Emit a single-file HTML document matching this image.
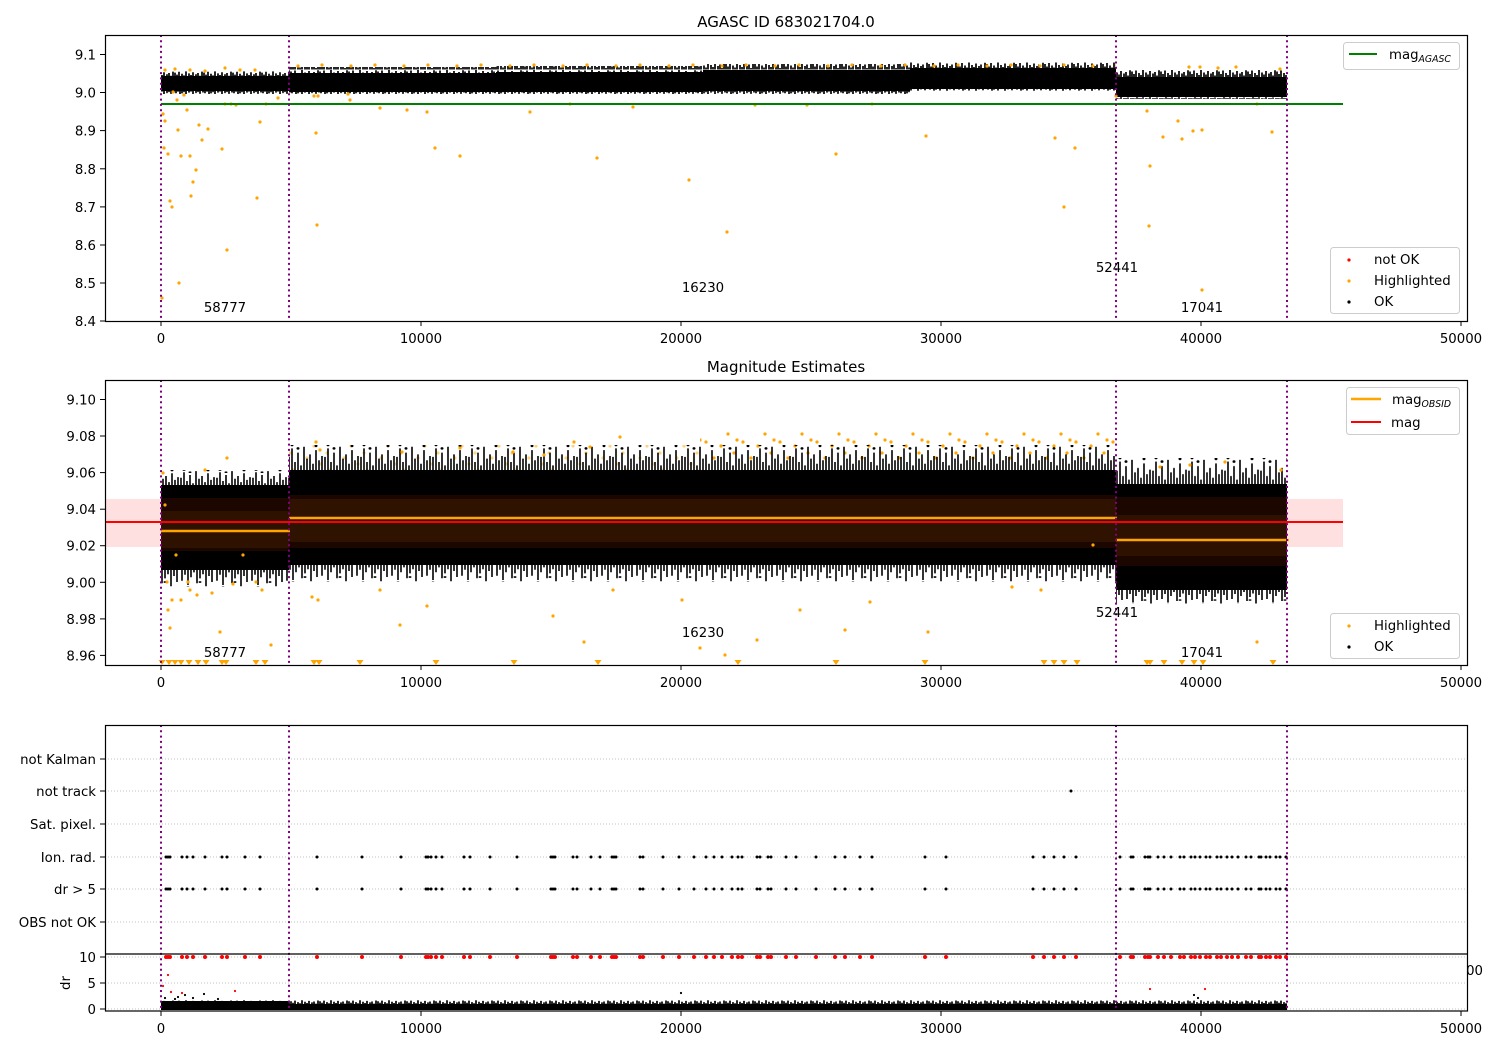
<!DOCTYPE html>
<html><head><meta charset="utf-8">
<style>
html,body{margin:0;padding:0;background:#fff;}
svg{display:block;font-family:"DejaVu Sans","Liberation Sans",sans-serif;}
</style></head>
<body>
<svg width="1500" height="1050" viewBox="0 0 1500 1050" xmlns="http://www.w3.org/2000/svg">
<defs>
<g id="upg" stroke="#000" stroke-width="1.7">
<path d="M1 30V8M3 30V18M5 30V4M8 30V14M10 30V22M12 30V2M15 30V12M17 30V20M19 30V6M22 30V16M24 30V10M26 30V24M28 30V3"/>
</g>
<g id="upg2" stroke="#000" stroke-width="1.6">
<path d="M1 30V14M4 30V4M7 30V20M10 30V9M13 30V24M16 30V2M19 30V16M22 30V11M25 30V22M28 30V6M31 30V18M34 30V13"/>
<path d="M4 0h0M16 -3h0M28 1h0M10 4h0" stroke-width="3" stroke-linecap="round"/>
</g>
<g id="dng" stroke="#000" stroke-width="1.7">
<path d="M1 0V20M3 0V9M5 0V26M8 0V13M10 0V5M12 0V28M15 0V17M17 0V8M19 0V24M22 0V12M24 0V19M26 0V6M28 0V27"/>
</g>
<g id="dng2" stroke="#000" stroke-width="1.6">
<path d="M2 0V18M5 0V8M8 0V25M11 0V12M14 0V4M17 0V22M20 0V14M23 0V7M26 0V27M29 0V10M32 0V20"/>
<path d="M8 29h0M26 30h0M20 20h0" stroke-width="3" stroke-linecap="round"/>
</g>
<pattern id="up1" patternUnits="userSpaceOnUse" width="29" height="30" patternTransform="translate(0,71) scale(1,0.2)"><use href="#upg"/></pattern>
<pattern id="up1b" patternUnits="userSpaceOnUse" width="29" height="30" patternTransform="translate(0,62) scale(1,0.25)"><use href="#upg"/></pattern>
<pattern id="dn1" patternUnits="userSpaceOnUse" width="29" height="30" patternTransform="translate(7,91) scale(1,0.12)"><use href="#dng"/></pattern>
<pattern id="up2" patternUnits="userSpaceOnUse" width="36" height="30" patternTransform="translate(0,445) scale(1,0.85)"><use href="#upg2"/></pattern>
<pattern id="up2a" patternUnits="userSpaceOnUse" width="36" height="30" patternTransform="translate(0,470) scale(1,0.55)"><use href="#upg2"/></pattern>
<pattern id="up2c" patternUnits="userSpaceOnUse" width="36" height="30" patternTransform="translate(0,458) scale(1,0.9)"><use href="#upg2"/></pattern>
<pattern id="dn2" patternUnits="userSpaceOnUse" width="35" height="30" patternTransform="translate(5,565) scale(1,0.6)"><use href="#dng2"/></pattern>
<pattern id="dn2a" patternUnits="userSpaceOnUse" width="35" height="30" patternTransform="translate(5,570) scale(1,0.6)"><use href="#dng2"/></pattern>
<pattern id="dn2c" patternUnits="userSpaceOnUse" width="35" height="30" patternTransform="translate(5,590) scale(1,0.5)"><use href="#dng2"/></pattern>
<pattern id="up3" patternUnits="userSpaceOnUse" width="29" height="30" patternTransform="translate(0,1000) scale(1,0.15)"><use href="#upg"/></pattern>
<pattern id="od" patternUnits="userSpaceOnUse" width="37" height="30">
<path d="M3 22h0M11 8h0M18 26h0M25 14h0M31 3h0M34 20h0" stroke="#ffa500" stroke-width="3.2" stroke-linecap="round"/></pattern>
<pattern id="od1" patternUnits="userSpaceOnUse" width="53" height="6" patternTransform="translate(0,62)">
<path d="M4 3h0M33 4h0" stroke="#ffa500" stroke-width="3.2" stroke-linecap="round"/></pattern>
<path id="ev" d="M166 0h0M168 0h0M170 0h0M182 0h0M187 0h0M193 0h0M205 0h0M222 0h0M227 0h0M245 0h0M260 0h0M317 0h0M362 0h0M401 0h0M426 0h0M428 0h0M431 0h0M436 0h0M442 0h0M464 0h0M470 0h0M490 0h0M517 0h0M551 0h0M553 0h0M555 0h0M573 0h0M577 0h0M591 0h0M600 0h0M612 0h0M614 0h0M616 0h0M640 0h0M643 0h0M663 0h0M679 0h0M694 0h0M706 0h0M714 0h0M722 0h0M732 0h0M738 0h0M742 0h0M757 0h0M760 0h0M768 0h0M771 0h0M786 0h0M796 0h0M816 0h0M835 0h0M845 0h0M860 0h0M872 0h0M925 0h0M946 0h0M1033 0h0M1044 0h0M1054 0h0M1064 0h0M1076 0h0M1120 0h0M1131 0h0M1133 0h0M1145 0h0M1148 0h0M1150 0h0M1158 0h0M1164 0h0M1171 0h0M1180 0h0M1184 0h0M1191 0h0M1195 0h0M1200 0h0M1206 0h0M1210 0h0M1217 0h0M1221 0h0M1227 0h0M1232 0h0M1238 0h0M1246 0h0M1251 0h0M1259 0h0M1261 0h0M1266 0h0M1270 0h0M1276 0h0M1280 0h0M1286 0h0"/>
</defs>
<rect width="1500" height="1050" fill="#fff"/>
<text x="1483" y="975" font-size="13.3" text-anchor="end" fill="#000">50000</text>

<text x="786" y="27" font-size="15" text-anchor="middle">AGASC ID 683021704.0</text>
<text x="786" y="372" font-size="15" text-anchor="middle">Magnitude Estimates</text>

<!-- PANEL 1 -->
<rect x="105" y="35" width="1362" height="286" fill="#fff"/>
<rect x="161" y="76" width="128" height="15" fill="#000"/>
<rect x="161" y="71" width="128" height="6" fill="url(#up1)"/>
<rect x="161" y="90" width="128" height="4" fill="url(#dn1)"/>
<!-- seg2 stepped -->
<rect x="289" y="73" width="207" height="19" fill="#000"/>
<rect x="496" y="72" width="207" height="20" fill="#000"/>
<rect x="703" y="70" width="207" height="21" fill="#000"/>
<rect x="910" y="68" width="206" height="21" fill="#000"/>
<rect x="289" y="67" width="207" height="7" fill="url(#up1b)"/>
<rect x="496" y="66" width="207" height="7" fill="url(#up1b)"/>
<rect x="703" y="64" width="207" height="7" fill="url(#up1b)"/>
<rect x="910" y="62" width="206" height="7" fill="url(#up1b)"/>
<rect x="289" y="91" width="621" height="3" fill="url(#dn1)"/>
<rect x="910" y="88" width="206" height="3" fill="url(#dn1)"/>
<rect x="1116" y="77" width="171" height="20" fill="#000"/>
<rect x="1116" y="70" width="171" height="8" fill="url(#up1b)"/>
<rect x="1116" y="96" width="171" height="3" fill="url(#dn1)"/>
<rect x="289" y="62" width="827" height="6" fill="url(#od1)"/>
<path d="M162 298h0M163 114h0M164 148h0M165 121h0M168 154h0M170 201h0M172 207h0M173 92h0M177 100h0M178 130h0M179 283h0M181 156h0M184 95h0M187 110h0M190 156h0M191 196h0M193 182h0M196 170h0M199 125h0M202 140h0M208 129h0M222 149h0M225 104h0M227 250h0M231 104h0M236 105h0M257 198h0M260 122h0M266 104h0M278 98h0M314 96h0M316 133h0M317 225h0M318 96h0M348 94h0M350 100h0M380 108h0M407 110h0M427 112h0M435 148h0M460 156h0M530 112h0M570 104h0M597 158h0M633 107h0M689 180h0M727 232h0M755 105h0M807 105h0M836 154h0M872 104h0M926 136h0M1055 138h0M1064 207h0M1075 148h0M1116 96h0M1147 111h0M1150 166h0M1149 226h0M1163 137h0M1182 139h0M1193 131h0M1202 290h0M1202 130h0M1257 104h0M1272 132h0M1178 121h0M165 70h0M175 69h0M190 70h0M205 71h0M225 68h0M240 70h0M255 70h0M1189 67h0M1200 67h0M1218 68h0M1236 67h0M1280 69h0" stroke="#ffa500" stroke-width="3.2" stroke-linecap="round"/>
<line x1="161" y1="104" x2="1343" y2="104" stroke="#008000" stroke-width="2"/>
<g stroke="#800080" stroke-width="2" stroke-dasharray="2,3.3">
<line x1="161" y1="35" x2="161" y2="321"/><line x1="289" y1="35" x2="289" y2="321"/>
<line x1="1116" y1="35" x2="1116" y2="321"/><line x1="1287" y1="35" x2="1287" y2="321"/>
</g>
<g font-size="13.3" text-anchor="middle">
<text x="225" y="312">58777</text><text x="703" y="292">16230</text>
<text x="1117" y="272">52441</text><text x="1202" y="312">17041</text>
</g>
<rect x="105.5" y="35.5" width="1362" height="286" fill="none" stroke="#000" stroke-width="1.2"/>
<g stroke="#000" stroke-width="1">
<line x1="161" y1="321" x2="161" y2="326"/><line x1="421" y1="321" x2="421" y2="326"/><line x1="681" y1="321" x2="681" y2="326"/><line x1="941" y1="321" x2="941" y2="326"/><line x1="1201" y1="321" x2="1201" y2="326"/><line x1="1461" y1="321" x2="1461" y2="326"/>
<line x1="100" y1="54.5" x2="105" y2="54.5"/><line x1="100" y1="92.5" x2="105" y2="92.5"/><line x1="100" y1="130.6" x2="105" y2="130.6"/><line x1="100" y1="168.8" x2="105" y2="168.8"/><line x1="100" y1="206.9" x2="105" y2="206.9"/><line x1="100" y1="245" x2="105" y2="245"/><line x1="100" y1="283" x2="105" y2="283"/><line x1="100" y1="321" x2="105" y2="321"/>
</g>
<g font-size="13.3" text-anchor="middle">
<text x="161" y="343">0</text><text x="421" y="343">10000</text><text x="681" y="343">20000</text><text x="941" y="343">30000</text><text x="1201" y="343">40000</text><text x="1461" y="343">50000</text>
</g>
<g font-size="13.3" text-anchor="end">
<text x="96" y="59.5">9.1</text><text x="96" y="97.5">9.0</text><text x="96" y="135.6">8.9</text><text x="96" y="173.8">8.8</text><text x="96" y="211.9">8.7</text><text x="96" y="250">8.6</text><text x="96" y="288">8.5</text><text x="96" y="326">8.4</text>
</g>
<rect x="1343.5" y="42.5" width="116" height="27" rx="3" fill="#fff" fill-opacity="0.8" stroke="#ccc"/>
<line x1="1349" y1="54" x2="1377" y2="54" stroke="#008000" stroke-width="2"/>
<text x="1389" y="59" font-size="13.3">mag<tspan font-size="9.3" font-style="italic" dy="3">AGASC</tspan></text>
<rect x="1330.5" y="247.5" width="129" height="66" rx="3" fill="#fff" fill-opacity="0.8" stroke="#ccc"/>
<circle cx="1349" cy="260" r="1.6" fill="#f00"/><circle cx="1349" cy="281" r="1.6" fill="#ffa500"/><circle cx="1349" cy="302" r="1.6" fill="#000"/>
<g font-size="13.3"><text x="1374" y="264">not OK</text><text x="1374" y="285">Highlighted</text><text x="1374" y="306">OK</text></g>

<!-- PANEL 2 -->
<rect x="105" y="380" width="1362" height="285" fill="#fff"/>
<rect x="105" y="499" width="1238" height="48" fill="#ff0000" fill-opacity="0.12"/>
<rect x="700" y="432" width="416" height="30" fill="url(#od)"/>
<rect x="289" y="445" width="411" height="25" fill="url(#od)" opacity="0.5"/>
<rect x="161" y="485" width="128" height="85" fill="#000"/>
<rect x="161" y="470" width="128" height="16" fill="url(#up2a)"/>
<rect x="161" y="569" width="128" height="18" fill="url(#dn2a)"/>
<rect x="289" y="470" width="827" height="95" fill="#000"/>
<rect x="289" y="445" width="827" height="26" fill="url(#up2)"/>
<rect x="289" y="564" width="827" height="18" fill="url(#dn2)"/>
<rect x="1116" y="484" width="171" height="106" fill="#000"/>
<rect x="1116" y="458" width="171" height="27" fill="url(#up2c)"/>
<rect x="1116" y="589" width="171" height="15" fill="url(#dn2c)"/>
<rect x="161" y="498" width="128" height="53" fill="#1c0600"/>
<rect x="161" y="511" width="128" height="37" fill="#2f1100"/>
<rect x="289" y="495" width="827" height="53" fill="#1c0600"/>
<rect x="289" y="499" width="827" height="43" fill="#301200"/>
<rect x="1116" y="497" width="171" height="69" fill="#1c0600"/>
<rect x="1116" y="515" width="171" height="41" fill="#2f1100"/>
<line x1="105" y1="522" x2="1343" y2="522" stroke="#f00" stroke-width="2"/>
<g stroke="#ffa500" stroke-width="2.4">
<line x1="161" y1="531" x2="290" y2="531"/><line x1="289" y1="518" x2="1117" y2="518"/><line x1="1116" y1="540" x2="1289" y2="540"/>
</g>
<path d="M163 473h0M165 505h0M167 582h0M168 610h0M170 628h0M172 600h0M176 555h0M181 600h0M188 582h0M190 590h0M197 595h0M205 470h0M212 593h0M220 632h0M227 458h0M233 584h0M243 555h0M256 582h0M262 590h0M271 645h0M312 597h0M318 600h0M380 590h0M400 625h0M427 606h0M553 616h0M584 642h0M613 590h0M682 600h0M700 648h0M725 655h0M757 640h0M800 610h0M845 630h0M870 602h0M928 632h0M1012 587h0M1041 590h0M1093 545h0M1257 642h0M1160 467h0M1190 465h0M1225 462h0M1281 470h0M316 442h0M320 450h0M402 452h0M460 448h0M513 452h0M544 455h0M574 442h0M590 447h0M620 437h0" stroke="#ffa500" stroke-width="3.2" stroke-linecap="round"/>
<path fill="#ffa500" d="M158.5 660h7l-3.5 5zM165.5 660h7l-3.5 5zM171.5 660h7l-3.5 5zM177.5 660h7l-3.5 5zM185.5 660h7l-3.5 5zM194.5 660h7l-3.5 5zM202.5 660h7l-3.5 5zM218.5 660h7l-3.5 5zM222.5 660h7l-3.5 5zM252.5 660h7l-3.5 5zM261.5 660h7l-3.5 5zM310.5 660h7l-3.5 5zM315.5 660h7l-3.5 5zM356.5 660h7l-3.5 5zM432.5 660h7l-3.5 5zM510.5 660h7l-3.5 5zM594.5 660h7l-3.5 5zM734.5 660h7l-3.5 5zM832.5 660h7l-3.5 5zM921.5 660h7l-3.5 5zM1040.5 660h7l-3.5 5zM1050.5 660h7l-3.5 5zM1060.5 660h7l-3.5 5zM1073.5 660h7l-3.5 5zM1143.5 660h7l-3.5 5zM1146.5 660h7l-3.5 5zM1160.5 660h7l-3.5 5zM1178.5 660h7l-3.5 5zM1190.5 660h7l-3.5 5zM1199.5 660h7l-3.5 5zM1269.5 660h7l-3.5 5z"/>
<g stroke="#800080" stroke-width="2" stroke-dasharray="2,3.3">
<line x1="161" y1="380" x2="161" y2="665"/><line x1="289" y1="380" x2="289" y2="665"/>
<line x1="1116" y1="380" x2="1116" y2="665"/><line x1="1287" y1="380" x2="1287" y2="665"/>
</g>
<g font-size="13.3" text-anchor="middle">
<text x="225" y="657">58777</text><text x="703" y="637">16230</text>
<text x="1117" y="617">52441</text><text x="1202" y="657">17041</text>
</g>
<rect x="105.5" y="380.5" width="1362" height="285" fill="none" stroke="#000" stroke-width="1.2"/>
<g stroke="#000" stroke-width="1">
<line x1="161" y1="665" x2="161" y2="670"/><line x1="421" y1="665" x2="421" y2="670"/><line x1="681" y1="665" x2="681" y2="670"/><line x1="941" y1="665" x2="941" y2="670"/><line x1="1201" y1="665" x2="1201" y2="670"/><line x1="1461" y1="665" x2="1461" y2="670"/>
<line x1="100" y1="399.5" x2="105" y2="399.5"/><line x1="100" y1="436" x2="105" y2="436"/><line x1="100" y1="472.6" x2="105" y2="472.6"/><line x1="100" y1="509.2" x2="105" y2="509.2"/><line x1="100" y1="545.7" x2="105" y2="545.7"/><line x1="100" y1="582.3" x2="105" y2="582.3"/><line x1="100" y1="618.9" x2="105" y2="618.9"/><line x1="100" y1="655.4" x2="105" y2="655.4"/>
</g>
<g font-size="13.3" text-anchor="middle">
<text x="161" y="687">0</text><text x="421" y="687">10000</text><text x="681" y="687">20000</text><text x="941" y="687">30000</text><text x="1201" y="687">40000</text><text x="1461" y="687">50000</text>
</g>
<g font-size="13.3" text-anchor="end">
<text x="96" y="404.5">9.10</text><text x="96" y="441">9.08</text><text x="96" y="477.6">9.06</text><text x="96" y="514.2">9.04</text><text x="96" y="550.7">9.02</text><text x="96" y="587.3">9.00</text><text x="96" y="623.9">8.98</text><text x="96" y="660.4">8.96</text>
</g>
<rect x="1346.5" y="387.5" width="113" height="47" rx="3" fill="#fff" fill-opacity="0.8" stroke="#ccc"/>
<line x1="1351" y1="399" x2="1381" y2="399" stroke="#ffa500" stroke-width="2.4"/>
<line x1="1351" y1="422" x2="1381" y2="422" stroke="#f00" stroke-width="2"/>
<text x="1392" y="404" font-size="13.3">mag<tspan font-size="9.3" font-style="italic" dy="3">OBSID</tspan></text>
<text x="1391" y="427" font-size="13.3">mag</text>
<rect x="1330.5" y="613.5" width="129" height="45" rx="3" fill="#fff" fill-opacity="0.8" stroke="#ccc"/>
<circle cx="1349" cy="626" r="1.6" fill="#ffa500"/><circle cx="1349" cy="647" r="1.6" fill="#000"/>
<g font-size="13.3"><text x="1374" y="630">Highlighted</text><text x="1374" y="651">OK</text></g>

<!-- PANEL 3 -->
<rect x="105" y="725" width="1362" height="286" fill="#fff"/>
<g stroke="#b0b0b0" stroke-width="0.8" stroke-dasharray="1,2">
<line x1="105" y1="759" x2="1467" y2="759"/><line x1="105" y1="791" x2="1467" y2="791"/><line x1="105" y1="824" x2="1467" y2="824"/><line x1="105" y1="857" x2="1467" y2="857"/><line x1="105" y1="889" x2="1467" y2="889"/><line x1="105" y1="922" x2="1467" y2="922"/>
<line x1="105" y1="957" x2="1467" y2="957"/><line x1="105" y1="983" x2="1467" y2="983"/><line x1="105" y1="1009" x2="1467" y2="1009"/>
</g>
<use href="#ev" transform="translate(0,857)" stroke="#000" stroke-width="3" stroke-linecap="round"/>
<use href="#ev" transform="translate(0,889)" stroke="#000" stroke-width="3" stroke-linecap="round"/>
<use href="#ev" transform="translate(0,957)" stroke="#f00" stroke-width="4" stroke-linecap="round"/>
<path d="M1071 791h0" stroke="#000" stroke-width="3" stroke-linecap="round"/>
<path d="M163 986h0M168 975h0M171 992h0M182 993h0M235 991h0M1150 989h0M1205 989h0" stroke="#f00" stroke-width="2.2" stroke-linecap="round"/>
<rect x="161" y="1004" width="1126" height="6" fill="#000"/>
<rect x="161" y="1000" width="1126" height="5" fill="url(#up3)"/>
<rect x="161" y="1001" width="128" height="4" fill="#000"/>
<path d="M165 998h0M175 999h0M178 997h0M185 995h0M193 998h0M204 994h0M218 999h0M681 993h0M1198 998h0M1194 995h0" stroke="#000" stroke-width="2.2" stroke-linecap="round"/>
<g stroke="#800080" stroke-width="2" stroke-dasharray="2,3.3">
<line x1="161" y1="725" x2="161" y2="1011"/><line x1="289" y1="725" x2="289" y2="1011"/>
<line x1="1116" y1="725" x2="1116" y2="1011"/><line x1="1287" y1="725" x2="1287" y2="1011"/>
</g>
<rect x="105.5" y="725.5" width="1362" height="285.5" fill="none" stroke="#000" stroke-width="1.2"/>
<line x1="105" y1="954" x2="1467" y2="954" stroke="#000" stroke-width="1.2"/>
<g stroke="#000" stroke-width="1">
<line x1="161" y1="1011" x2="161" y2="1016"/><line x1="421" y1="1011" x2="421" y2="1016"/><line x1="681" y1="1011" x2="681" y2="1016"/><line x1="941" y1="1011" x2="941" y2="1016"/><line x1="1201" y1="1011" x2="1201" y2="1016"/><line x1="1461" y1="1011" x2="1461" y2="1016"/>
<line x1="100" y1="759" x2="105" y2="759"/><line x1="100" y1="791" x2="105" y2="791"/><line x1="100" y1="824" x2="105" y2="824"/><line x1="100" y1="857" x2="105" y2="857"/><line x1="100" y1="889" x2="105" y2="889"/><line x1="100" y1="922" x2="105" y2="922"/>
<line x1="100" y1="957" x2="105" y2="957"/><line x1="100" y1="983" x2="105" y2="983"/><line x1="100" y1="1009" x2="105" y2="1009"/>
</g>
<g font-size="13.3" text-anchor="middle">
<text x="161" y="1033">0</text><text x="421" y="1033">10000</text><text x="681" y="1033">20000</text><text x="941" y="1033">30000</text><text x="1201" y="1033">40000</text><text x="1461" y="1033">50000</text>
</g>
<g font-size="13.3" text-anchor="end">
<text x="96" y="764">not Kalman</text><text x="96" y="796">not track</text><text x="96" y="829">Sat. pixel.</text><text x="96" y="862">Ion. rad.</text><text x="96" y="894">dr &gt; 5</text><text x="96" y="927">OBS not OK</text>
<text x="96" y="962">10</text><text x="96" y="988">5</text><text x="96" y="1014">0</text>
</g>
<text x="0" y="0" font-size="13.3" text-anchor="middle" transform="translate(70,983) rotate(-90)">dr</text>
</svg>
</body></html>
